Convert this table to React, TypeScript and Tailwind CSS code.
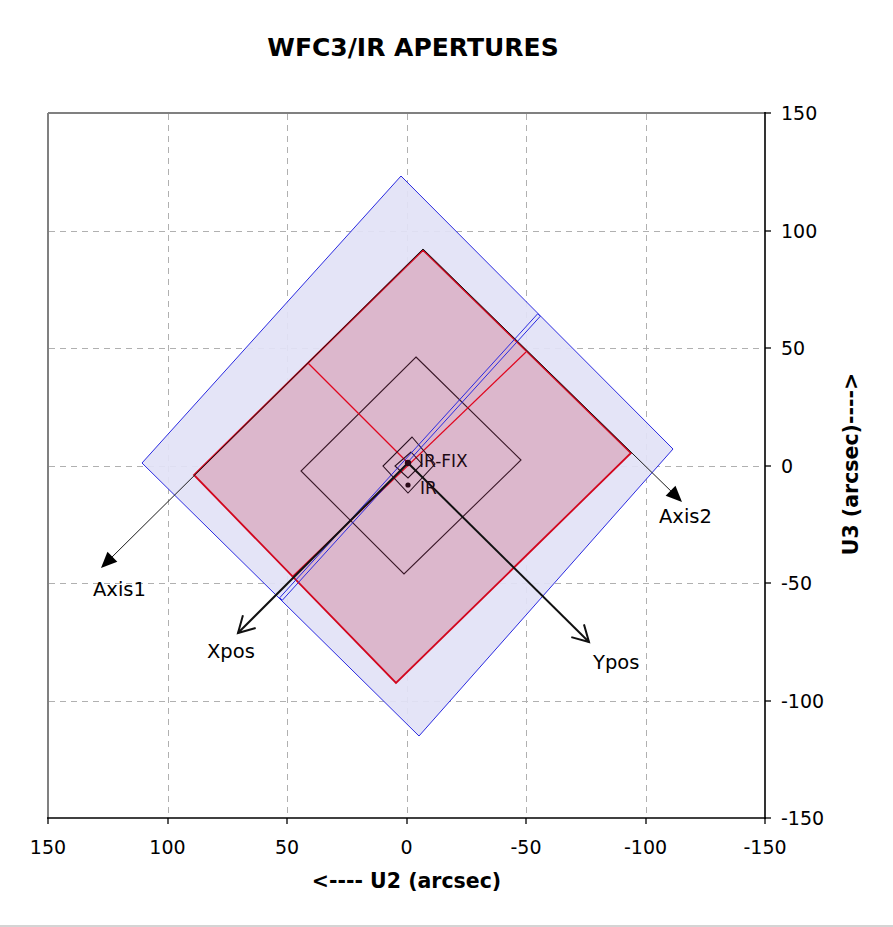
import React from "react";

type P = [number, number];
const pts = (a: P[]) => a.map((p) => `${p[0]},${p[1]}`).join(" ");

function head(tip: P, from: P, len: number, half: number): P[] {
  const dx = tip[0] - from[0];
  const dy = tip[1] - from[1];
  const L = Math.hypot(dx, dy);
  const ux = dx / L;
  const uy = dy / L;
  const bx = tip[0] - ux * len;
  const by = tip[1] - uy * len;
  return [
    [bx - uy * half, by + ux * half],
    tip,
    [bx + uy * half, by - ux * half],
  ];
}

const GX = [48, 167.5, 287, 406.5, 526, 645.5, 765];
const GY = [113, 230.5, 348, 465.5, 583, 700.5, 818];
const XL = ["150", "100", "50", "0", "-50", "-100", "-150"];
const YL = ["150", "100", "50", "0", "-50", "-100", "-150"];

export default function App() {
  const center: P = [408, 463];
  const redTop: P = [423, 250];
  const redRight: P = [631, 453];
  const redBottom: P = [396, 683];
  const redLeft: P = [194, 475];
  const axis1Tip: P = [101, 568];
  const axis2Tip: P = [682, 502];
  const xposTip: P = [238, 633];
  const yposTip: P = [589, 642];

  // blue strip
  const s1: P = [539, 315];
  const s2: P = [281, 599];
  const sdx = s2[0] - s1[0];
  const sdy = s2[1] - s1[1];
  const sl = Math.hypot(sdx, sdy);
  const px = (-sdy / sl) * 1.8;
  const py = (sdx / sl) * 1.8;
  const strip: P[] = [
    [s1[0] + px, s1[1] + py],
    [s2[0] + px, s2[1] + py],
    [s2[0] - px, s2[1] - py],
    [s1[0] - px, s1[1] - py],
  ];

  return (
    <div className="w-[893px] h-[927px] bg-white flex flex-col font-['DejaVu_Sans',Verdana,sans-serif] text-black overflow-hidden">
      <div className="h-[60px] w-[826px] pt-[35px] text-center text-[25px] leading-[25px] font-bold">
        WFC3/IR APERTURES
      </div>
      <svg
        width={893}
        height={865}
        viewBox="0 60 893 865"
        className="block shrink-0"
      >
        {/* grid */}
        {GX.slice(1, 6).map((x) => (
          <line
            key={"gx" + x}
            x1={Math.round(x) + 0.5}
            x2={Math.round(x) + 0.5}
            y1={114}
            y2={817}
            stroke="#b0b0b0"
            strokeWidth={1}
            strokeDasharray="6 5"
          />
        ))}
        {GY.slice(1, 6).map((y) => (
          <line
            key={"gy" + y}
            y1={Math.round(y) + 0.5}
            y2={Math.round(y) + 0.5}
            x1={49}
            x2={764}
            stroke="#b0b0b0"
            strokeWidth={1}
            strokeDasharray="6 5"
          />
        ))}

        {/* big blue diamond */}
        <polygon
          points={pts([
            [401, 176],
            [673, 449],
            [419, 736],
            [142, 463],
          ])}
          fill="#e2e2f6"
          fillOpacity={0.92}
          stroke="#2a2ae0"
          strokeWidth={1}
        />

        {/* red diamond */}
        <polygon
          points={pts([redTop, redRight, redBottom, redLeft])}
          fill="#dbb4c9"
          fillOpacity={0.95}
          stroke="#d2061e"
          strokeWidth={1.8}
        />

        {/* medium diamond */}
        <polygon
          points={pts([
            [416, 357],
            [521, 460],
            [404, 574],
            [301, 471],
          ])}
          fill="none"
          stroke="#3a1828"
          strokeWidth={1.1}
        />

        {/* red quadrant lines */}
        <line x1={308} y1={363} x2={408} y2={463} stroke="#e0061e" strokeWidth={1.2} />
        <line x1={526} y1={352} x2={292} y2={577} stroke="#e0061e" strokeWidth={1.2} />

        {/* small diamonds */}
        <polygon
          points={pts([
            [412, 437],
            [435, 464],
            [408, 493],
            [383, 466],
          ])}
          fill="none"
          stroke="#2a1020"
          strokeWidth={1.1}
        />
        <polygon
          points={pts([
            [411, 452],
            [422, 464],
            [408, 478],
            [395, 466],
          ])}
          fill="none"
          stroke="#2a1020"
          strokeWidth={1.1}
        />

        {/* blue strip */}
        <polygon points={pts(strip)} fill="none" stroke="#2a2ae0" strokeWidth={1} />

        {/* Axis1 / Axis2 lines */}
        <line
          x1={redTop[0]}
          y1={redTop[1] - 1}
          x2={axis1Tip[0] + 6}
          y2={axis1Tip[1] - 6}
          stroke="#1a1a1a"
          strokeWidth={1}
        />
        <polygon points={pts(head(axis1Tip, redTop, 16, 7))} fill="#000" />
        <line
          x1={redTop[0]}
          y1={redTop[1] - 1}
          x2={axis2Tip[0] - 6}
          y2={axis2Tip[1] - 6}
          stroke="#1a1a1a"
          strokeWidth={1}
        />
        <polygon points={pts(head(axis2Tip, [423, 249], 16, 7))} fill="#000" />

        {/* Xpos / Ypos */}
        <line
          x1={center[0]}
          y1={center[1]}
          x2={xposTip[0]}
          y2={xposTip[1]}
          stroke="#111"
          strokeWidth={2}
        />
        <polyline
          points={pts(head(xposTip, center, 16, 9))}
          fill="none"
          stroke="#111"
          strokeWidth={2}
        />
        <line
          x1={center[0]}
          y1={center[1]}
          x2={yposTip[0]}
          y2={yposTip[1]}
          stroke="#111"
          strokeWidth={2}
        />
        <polyline
          points={pts(head(yposTip, center, 16, 9))}
          fill="none"
          stroke="#111"
          strokeWidth={2}
        />

        {/* dots */}
        <circle cx={408} cy={463} r={3.2} fill="#2a0a18" />
        <circle cx={408} cy={485} r={2.6} fill="#2a0a18" />

        {/* point labels */}
        <text x={419} y={461} fontSize={17} dominantBaseline="central" fill="#1e0a14">
          IR-FIX
        </text>
        <text x={420} y={488} fontSize={17} dominantBaseline="central" fill="#1e0a14">
          IR
        </text>
        <text x={93} y={589} fontSize={19.5} dominantBaseline="central" fill="#000">
          Axis1
        </text>
        <text x={659} y={516} fontSize={19.5} dominantBaseline="central" fill="#000">
          Axis2
        </text>
        <text x={207} y={651} fontSize={19.5} dominantBaseline="central" fill="#000">
          Xpos
        </text>
        <text x={593} y={662} fontSize={19.5} dominantBaseline="central" fill="#000">
          Ypos
        </text>

        {/* frame */}
        <line x1={48} y1={113} x2={48} y2={818} stroke="#808080" strokeWidth={2} />
        <line x1={48} y1={113} x2={765} y2={113} stroke="#808080" strokeWidth={2} />
        <line x1={765} y1={112} x2={765} y2={819} stroke="#000" strokeWidth={1.6} />
        <line x1={47} y1={818} x2={766} y2={818} stroke="#000" strokeWidth={1.6} />

        {/* ticks */}
        {GY.map((y) => (
          <line
            key={"ty" + y}
            x1={765}
            x2={771}
            y1={Math.round(y)}
            y2={Math.round(y)}
            stroke="#000"
            strokeWidth={1.3}
          />
        ))}
        {GX.map((x) => (
          <line
            key={"tx" + x}
            x1={Math.round(x)}
            x2={Math.round(x)}
            y1={818}
            y2={824}
            stroke="#000"
            strokeWidth={1.3}
          />
        ))}

        {/* tick labels */}
        {GY.map((y, i) => (
          <text
            key={"ly" + i}
            x={781}
            y={y}
            fontSize={19}
            dominantBaseline="central"
            fill="#000"
          >
            {YL[i]}
          </text>
        ))}
        {GX.map((x, i) => (
          <text
            key={"lx" + i}
            x={x}
            y={847}
            fontSize={19}
            textAnchor="middle"
            dominantBaseline="central"
            fill="#000"
          >
            {XL[i]}
          </text>
        ))}

        {/* axis titles */}
        <text
          x={406.5}
          y={881}
          fontSize={20.5}
          fontWeight="bold"
          textAnchor="middle"
          dominantBaseline="central"
          fill="#000"
        >
          {"<---- U2 (arcsec)"}
        </text>
        <text
          x={851}
          y={464}
          fontSize={20.5}
          fontWeight="bold"
          textAnchor="middle"
          dominantBaseline="central"
          fill="#000"
          transform="rotate(-90 851 464)"
        >
          {"U3 (arcsec)---->"}
        </text>
      </svg>
      <div className="h-[2px] w-full bg-[#d4d4d4]" />
    </div>
  );
}
